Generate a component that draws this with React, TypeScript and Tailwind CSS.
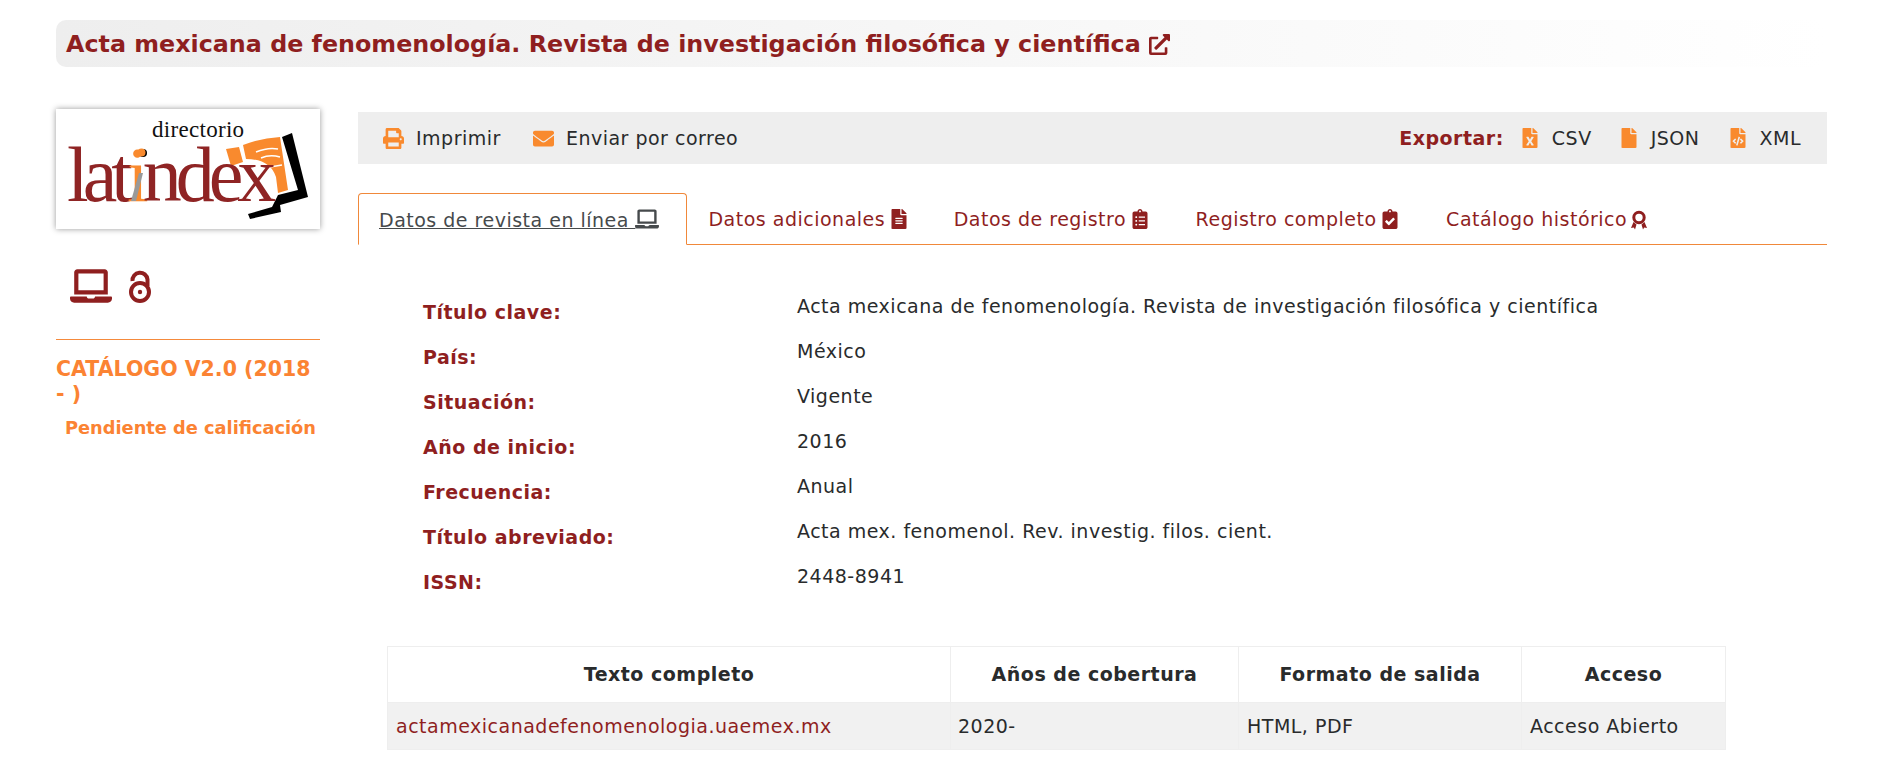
import { FaPrint, FaEnvelope, FaFileExcel, FaFile, FaFileCode, FaLaptop, FaFileAlt, FaClipboardList, FaClipboardCheck, FaExternalLinkAlt } from 'react-icons/fa'

const rows = [
  ['Título clave:', 'Acta mexicana de fenomenología. Revista de investigación filosófica y científica'],
  ['País:', 'México'],
  ['Situación:', 'Vigente'],
  ['Año de inicio:', '2016'],
  ['Frecuencia:', 'Anual'],
  ['Título abreviado:', 'Acta mex. fenomenol. Rev. investig. filos. cient.'],
  ['ISSN:', '2448-8941'],
]

function Logo() {
  return (
    <svg viewBox="0 0 264 120" className="w-full h-full">
      <path d="M170 40 L183 38 L187 53 L175 57 Z" fill="#f98a2e" />
      <path d="M187 36 Q205 29 224 28 L232 81 L222 84 L220 68 Q214 50 190 50 Z" fill="#f98a2e" />
      <path d="M200 43 Q212 38 222 40 M205 49 Q214 45 224 48 M214 58 L226 56" stroke="#fff" strokeWidth="1.5" fill="none" />
      <path d="M226 28 L236 24 L252 88 L224 96 L225 103 L194 110 L192 105 L216 98 L222 86 L242 81 Z" fill="#000" />
      <text x="96" y="28" fontFamily="Liberation Serif" fontSize="23" letterSpacing="0.3" fill="#111">directorio</text>
      <text x="11" y="92" fontFamily="Liberation Serif" fontSize="78" letterSpacing="-6" fill="#8f2424">
        lat<tspan fill="#f98a2e">i</tspan>ndex
      </text>
      <path d="M83 64 L87 64 L80 92 L75 92 Z" fill="#999" />
      <circle cx="87" cy="44" r="4" fill="#000" />
      <circle cx="85.5" cy="43.5" r="4" fill="#f98a2e" />
    </svg>
  )
}

function OpenAccess() {
  return (
    <svg viewBox="0 0 22 33" className="w-[22px] h-[33px]" fill="none" stroke="currentColor">
      <path d="M3.5 11 A7.5 7.5 0 0 1 18.5 9.5 V16" strokeWidth="4" />
      <circle cx="11" cy="22" r="9" strokeWidth="4" />
      <circle cx="11" cy="22" r="2.2" fill="currentColor" stroke="none" />
    </svg>
  )
}

function Ribbon() {
  return (
    <svg viewBox="0 0 16 20" className="inline w-[16px] h-[20px] align-[-4px] -ml-[3px]" fill="currentColor">
      <circle cx="8" cy="7.5" r="5.2" fill="none" stroke="currentColor" strokeWidth="3" />
      <path d="M2.5 12 L5.5 14.5 L4 19.5 L2.8 17.5 L0 18 Z M13.5 12 L10.5 14.5 L12 19.5 L13.2 17.5 L16 18 Z" />
    </svg>
  )
}

export default function App() {
  return (
    <div className="min-h-screen bg-white font-['DejaVu_Sans',sans-serif] text-[#292b2c] text-[19px] tracking-[0.5px] overflow-hidden">
      <div className="pl-[56px] pr-[50px] pt-[20px]">
        <h1 className="h-[47px] flex items-center gap-[8px] px-[10px] pt-[2px] rounded-[10px] bg-gradient-to-r from-[#eeeeee] to-white font-bold text-[23.8px] tracking-normal text-[#8f1f1f]">
          Acta mexicana de fenomenología. Revista de investigación filosófica y científica
          <FaExternalLinkAlt className="text-[21px]" />
        </h1>
      </div>
      <div className="flex pl-[56px] pr-[50px] pt-[42px] gap-[38px]">
        <aside className="w-[264px] shrink-0">
          <div className="h-[120px] shadow-[0_0_6px_rgba(0,0,0,0.4)]"><Logo /></div>
          <div className="flex items-center gap-[17px] pl-[14px] mt-[36px] text-[#8f1f1f]">
            <FaLaptop className="text-[42px]" />
            <OpenAccess />
          </div>
          <div className="border-t border-[#f58a3c] mt-[32px] pt-[17px] font-bold text-[#fb8333] text-[20.5px] tracking-normal leading-[25px]">CATÁLOGO V2.0 (2018 - )</div>
          <div className="font-bold text-[#fb8333] text-[17.8px] tracking-normal pl-[9px] mt-[8px]">Pendiente de calificación</div>
        </aside>
        <main className="w-[1469px] shrink-0 pt-[3px]">
          <div className="h-[52px] bg-[#eeeeee] flex items-center justify-between pl-[25px] pr-[26px]">
            <div className="flex items-center gap-[32px]">
              <span className="flex items-center gap-[12px]"><FaPrint className="text-[#f98a2e] text-[21px]" />Imprimir</span>
              <span className="flex items-center gap-[12px]"><FaEnvelope className="text-[#f98a2e] text-[21px]" />Enviar por correo</span>
            </div>
            <div className="flex items-center">
              <b className="text-[#8f1f1f] mr-[16px]">Exportar:</b>
              <span className="flex items-center gap-[12px] mr-[27px]"><FaFileExcel className="text-[#f98a2e] text-[20px]" />CSV</span>
              <span className="flex items-center gap-[12px] mr-[28px]"><FaFile className="text-[#f98a2e] text-[20px]" />JSON</span>
              <span className="flex items-center gap-[12px]"><FaFileCode className="text-[#f98a2e] text-[20px]" />XML</span>
            </div>
          </div>
          <div className="flex h-[52px] mt-[29px] border-b border-[#f0883a] text-[#8f1f1f]">
            <div className="h-[52px] border border-[#f0883a] border-b-white rounded-t-[4px] pl-[20px] pr-[27px] pt-[2px] flex items-center bg-white text-[#464a4c]">
              <span className="underline">Datos de revista en línea <FaLaptop className="inline text-[24px] align-[-4px]" /></span>
            </div>
            <div className="-ml-[2px] pl-[23px] pr-[22px] pt-[2px] flex items-center"><span>Datos adicionales <FaFileAlt className="inline text-[20px] align-[-3px] -ml-[3px]" /></span></div>
            <div className="px-[23px] pt-[2px] flex items-center"><span>Datos de registro <FaClipboardList className="inline text-[20px] align-[-3px] -ml-[3px]" /></span></div>
            <div className="px-[23px] pt-[2px] flex items-center"><span>Registro completo <FaClipboardCheck className="inline text-[20px] align-[-3px] -ml-[3px]" /></span></div>
            <div className="px-[23px] pt-[2px] flex items-center"><span>Catálogo histórico <Ribbon /></span></div>
          </div>
          <div className="mt-[47px] pl-[65px]">
            {rows.map(([k, v]) => (
              <div key={k} className="flex h-[45px]">
                <b className="w-[374px] text-[#8f1f1f] pt-[6px]">{k}</b>
                <span>{v}</span>
              </div>
            ))}
          </div>
          <table className="ml-[29px] mt-[39px] w-[1339px] border-collapse table-fixed">
            <thead>
              <tr className="h-[56px]">
                <th className="w-[563px] border border-[#eee]">Texto completo</th>
                <th className="w-[288px] border border-[#eee]">Años de cobertura</th>
                <th className="w-[283px] border border-[#eee]">Formato de salida</th>
                <th className="border border-[#eee]">Acceso</th>
              </tr>
            </thead>
            <tbody>
              <tr className="h-[47px] bg-[#f1f1f1]">
                <td className="border border-[#eee] px-2 text-[#8f1f1f]">actamexicanadefenomenologia.uaemex.mx</td>
                <td className="border border-[#eee] px-[7px]">2020-</td>
                <td className="border border-[#eee] px-2">HTML, PDF</td>
                <td className="border border-[#eee] px-2">Acceso Abierto</td>
              </tr>
            </tbody>
          </table>
        </main>
      </div>
    </div>
  )
}
